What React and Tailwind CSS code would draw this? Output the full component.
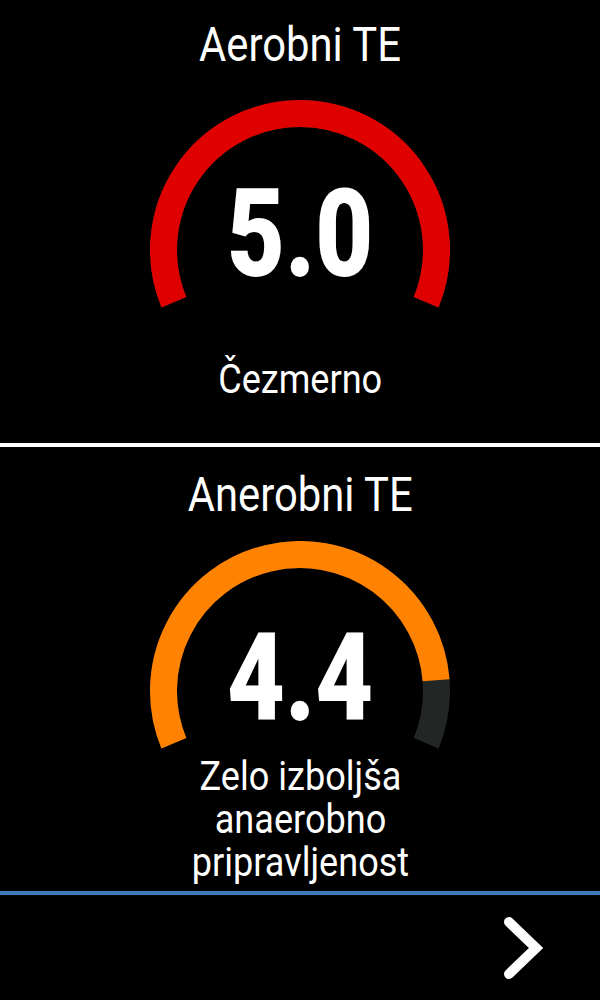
import React from 'react';

const FONT = "font-['Roboto',sans-serif]";

// arc from 202.5deg (left, below horizontal) clockwise to -22.5deg
const polar = (cx, cy, r, deg) => {
    const a = (deg * Math.PI) / 180;
    return [cx + r * Math.cos(a), cy - r * Math.sin(a)];
};

const arcPath = (from, to, r = 136.5) => {
    const [x1, y1] = polar(150, 150, r, from);
    const [x2, y2] = polar(150, 150, r, to);
    const large = from - to > 180 ? 1 : 0;
    return `M ${x1} ${y1} A ${r} ${r} 0 ${large} 1 ${x2} ${y2}`;
};

const Gauge = ({ value, color, numberTop }) => {
    const start = 202.5;
    const end = -22.5;
    const split = start - (value / 5) * (start - end);
    return (
        <div className="grid w-[300px] h-[210px]">
            <svg className="col-start-1 row-start-1" width="300" height="210" viewBox="0 0 300 210">
                <path d={arcPath(start, end)} fill="none" stroke="#222624" strokeWidth="27" />
                <path d={arcPath(start, split)} fill="none" stroke={color} strokeWidth="27" />
            </svg>
            <div className={`col-start-1 row-start-1 flex justify-center ${numberTop}`}>
                <span className={`${FONT} font-black text-white text-[122px] leading-none scale-x-[0.82] inline-block`}>
                    {value.toFixed(1)}
                </span>
            </div>
        </div>
    );
};

const Title = ({ children, className }) => (
    <div className={`flex justify-center ${className}`}>
        <span className={`${FONT} text-white text-[48px] leading-[56px] scale-x-[0.87] inline-block`}>{children}</span>
    </div>
);

const Caption = ({ children }) => (
    <div className="flex justify-center">
        <span className={`${FONT} text-white text-[41px] leading-[43px] scale-x-[0.88] inline-block whitespace-pre-line text-center`}>{children}</span>
    </div>
);

export default function App() {
    return (
        <div className="w-[600px] h-[1000px] bg-black flex flex-col overflow-hidden">
            {/* aerobic */}
            <div className="h-[443px] flex flex-col items-center">
                <Title className="mt-[17px] w-full">Aerobni TE</Title>
                <div className="mt-[27px]">
                    <Gauge value={5.0} color="#df0000" numberTop="pt-[74px]" />
                </div>
                <div className="mt-[48px] w-full">
                    <Caption>Čezmerno</Caption>
                </div>
            </div>
            <div className="h-[4px] bg-white" />
            {/* anaerobic */}
            <div className="h-[444px] flex flex-col items-center">
                <Title className="mt-[20px] w-full">Anerobni TE</Title>
                <div className="mt-[18px]">
                    <Gauge value={4.4} color="#ff8200" numberTop="pt-[77px]" />
                </div>
                <div className="mt-[4px] w-full">
                    <Caption>{'Zelo izboljša\nanaerobno\npripravljenost'}</Caption>
                </div>
            </div>
            <div className="h-[4px] bg-[#3d7bb8]" />
            <div className="flex-1 flex justify-end items-center pr-[54px]">
                <svg width="46" height="70" viewBox="0 0 46 70">
                    <polyline points="9,9 36,35 9,61" fill="none" stroke="white" strokeWidth="10" strokeLinecap="round" strokeLinejoin="miter" />
                </svg>
            </div>
        </div>
    );
}
